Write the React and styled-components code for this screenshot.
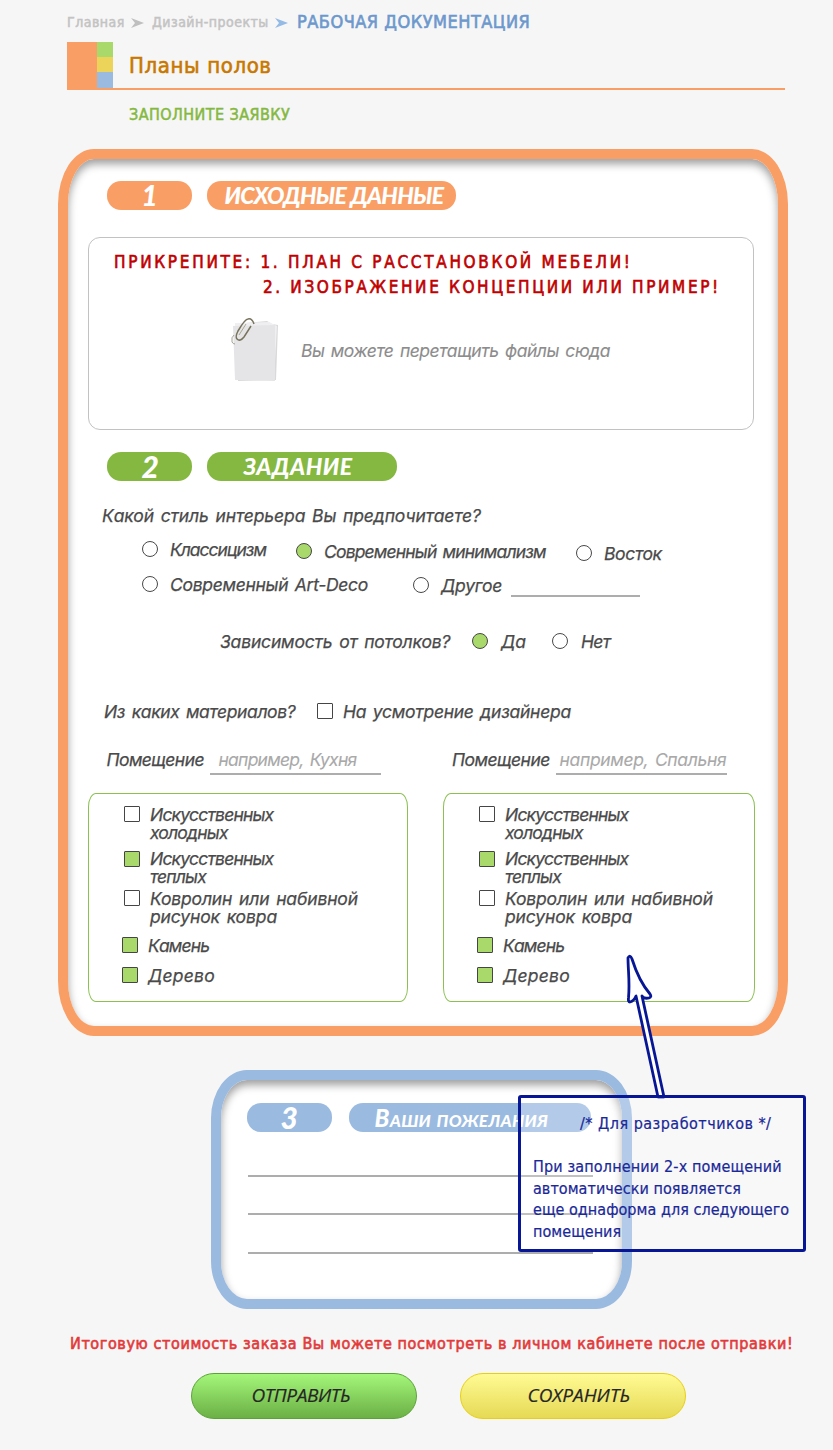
import React from 'react';
import styled, { createGlobalStyle } from 'styled-components';

const tahoma = '"DejaVu Sans Condensed", "DejaVu Sans", sans-serif';
const hand = 'Inter, "Open Sans", sans-serif';
const marker = 'Lato, Inter, sans-serif';

const Global = createGlobalStyle`
  *, *::before, *::after { box-sizing: border-box; }
  body { margin: 0; background: #f6f6f6; }
`;

const Page = styled.div`
  position: relative;
  width: 833px;
  height: 1450px;
  overflow: hidden;
  background: #f6f6f6;
  font-family: ${tahoma};
`;

const Breadcrumbs = styled.nav`
  display: flex;
  align-items: center;
  height: 42px;
  padding: 3px 0 0 67px;
`;

const Crumb = styled.span`
  width: ${p => p.$w}px;
  white-space: nowrap;
  font-size: ${p => (p.$current ? 18 : 14)}px;
  line-height: 20px;
  letter-spacing: ${p => (p.$current ? 0.5 : 0.48)}px;
  color: ${p => (p.$current ? '#6d98cd' : '#c3c3c3')};
  -webkit-text-stroke: ${p => (p.$current ? 0.6 : 0.5)}px currentColor;
  margin-top: ${p => (p.$current ? -2 : -1)}px;
`;

const CrumbArrow = styled.svg`
  width: 13px;
  height: 10px;
  margin: 0 ${p => p.$after}px 0 ${p => p.$before}px;
  fill: ${p => p.$color};
`;

const TitleBar = styled.header`
  display: flex;
  align-items: stretch;
  width: 718px;
  height: 48px;
  margin-left: 67px;
  border-bottom: 2px solid #f99f66;
`;

const LogoMain = styled.div`
  width: 30px;
  background: #f99f66;
`;

const LogoStack = styled.div`
  display: grid;
  grid-template-rows: 15px 15px 16px;
  width: 16px;
`;

const Swatch = styled.div`
  background: ${p => p.$color};
`;

const Title = styled.h1`
  margin: 0 0 0 16px;
  font-size: 22px;
  font-weight: 400;
  line-height: 47px;
  letter-spacing: 0.6px;
  color: #c87800;
  -webkit-text-stroke: 0.6px currentColor;
`;

const Subtitle = styled.h2`
  height: 59px;
  margin: 0 0 0 129px;
  padding-top: 15px;
  font-size: 16px;
  font-weight: 400;
  line-height: 20px;
  letter-spacing: 0.45px;
  color: #85b840;
  -webkit-text-stroke: 0.5px currentColor;
`;

const Panel = styled.section`
  width: ${p => p.$w}px;
  height: ${p => p.$h}px;
  margin-left: ${p => p.$x}px;
  margin-top: ${p => p.$above || 0}px;
  padding-top: ${p => p.$pad}px;
  border: 10px solid ${p => p.$color};
  border-radius: ${p => p.$radius};
  background: #fff;
  box-shadow: inset 0 5px 9px rgba(0, 0, 0, 0.38);
`;

const SectionHead = styled.div`
  display: flex;
  gap: ${p => p.$gap || 15}px;
  height: 29px;
  margin-left: ${p => p.$x}px;
`;

const Pill = styled.div`
  display: flex;
  align-items: center;
  width: ${p => p.$w}px;
  padding-left: ${p => p.$pad}px;
  border-radius: 14px;
  background: ${p => p.$color};
  color: #fff;
  font: italic 900 ${p => p.$size || 23}px/29px ${marker};
  letter-spacing: ${p => p.$ls || 0}px;
  font-variant-caps: ${p => (p.$small ? 'small-caps' : 'normal')};
  white-space: nowrap;
`;

const DropZone = styled.div`
  width: 666px;
  height: 193px;
  margin: 27px 0 22px 20px;
  padding: 12px 0 0 25px;
  border: 1px solid #c2c2c2;
  border-radius: 12px;
`;

const Attach = styled.p`
  margin: 0;
  padding-left: ${p => p.$indent || 0}px;
  font-size: 17px;
  line-height: 25px;
  letter-spacing: ${p => p.$ls}px;
  white-space: nowrap;
  color: #c00000;
  -webkit-text-stroke: 0.6px currentColor;
`;

const DropHint = styled.div`
  display: flex;
  align-items: center;
  margin: 17px 0 0 115px;
`;

const PaperIcon = styled.svg`
  width: 52px;
  height: 70px;
  margin: -2px 20px 0 0;
`;

const Text = styled.span`
  display: block;
  font: italic 400 17.5px/18px ${hand};
  letter-spacing: ${p => p.$ls || 0}px;
  word-spacing: 2px;
  white-space: pre-line;
  flex: none;
  color: ${p => (p.$muted ? '#8c8c8c' : '#4a4a4a')};
  -webkit-text-stroke: ${p => (p.$muted ? 0.1 : 0.25)}px currentColor;
`;

const Row = styled.div`
  display: flex;
  align-items: flex-start;
  height: ${p => p.$h}px;
  padding-top: ${p => p.$top || 0}px;
  padding-left: ${p => p.$x}px;
`;

const Choice = styled.label`
  display: flex;
  align-items: flex-start;
  width: ${p => p.$w}px;
  margin-top: ${p => p.$drop || 0}px;
`;

const Question = styled.div`
  width: ${p => p.$w}px;
`;

const Radio = styled.i`
  flex: none;
  width: 16px;
  height: 16px;
  margin-right: ${p => p.$gap || 12}px;
  border: 1px solid #484848;
  border-radius: 50%;
  background: ${p => (p.$on ? '#a8d96a' : '#fff')};
`;

const Check = styled.i`
  flex: none;
  width: 16px;
  height: 16px;
  margin-top: ${p => p.$top || 0}px;
  margin-right: ${p => p.$gap || 10}px;
  border: 1px solid #454545;
  border-radius: 1px;
  background: ${p => (p.$on ? '#a8d96a' : '#fff')};
`;

const Blank = styled.div`
  width: ${p => p.$w}px;
  height: ${p => p.$h || 24}px;
  padding-left: ${p => p.$pad || 0}px;
  border-bottom: 2px solid #adadad;
  ${Text} { color: #a9a9a9; -webkit-text-stroke-width: 0.1px; }
`;

const Rooms = styled.div`
  display: grid;
  grid-template-columns: 320px 312px;
  column-gap: 35px;
  margin-left: 20px;
`;

const RoomName = styled.div`
  display: flex;
  height: 42px;
  padding-left: ${p => p.$x}px;
`;

const Materials = styled.div`
  height: 209px;
  padding: 12px 0 0 35px;
  border: 1px solid #8cc152;
  border-radius: 8px / 14px;
`;

const Material = styled.label`
  display: flex;
  align-items: flex-start;
  height: ${p => p.$h}px;
  margin-left: ${p => p.$shift || 0}px;
`;

const WishLine = styled.div`
  width: 345px;
  height: ${p => p.$h}px;
  margin-left: 27px;
  border-bottom: 2px solid #adadad;
`;

const Note = styled.aside`
  position: absolute;
  left: 518px;
  top: 1095px;
  width: 288px;
  height: 157px;
  padding: 15px 0 0 12px;
  border: 3px solid #071694;
  border-radius: 3px;
  background: rgba(255, 255, 255, 0.25);
  color: #1a2899;
  font-size: 16px;
  line-height: 21.6px;
  white-space: nowrap;
`;

const NoteLine = styled.div`
  letter-spacing: ${p => p.$ls}px;
  -webkit-text-stroke: 0.2px currentColor;
`;

const NoteTitle = styled(NoteLine)`
  padding-left: 47px;
  margin-bottom: 21.6px;
`;

const NoteArrow = styled.svg`
  position: absolute;
  left: 620px;
  top: 950px;
  width: 50px;
  height: 150px;
`;

const Total = styled.p`
  margin: 23px 0 17px 70px;
  font-size: 16px;
  line-height: 24px;
  letter-spacing: 0.61px;
  white-space: nowrap;
  color: #e23a3a;
  -webkit-text-stroke: 0.6px currentColor;
`;

const Actions = styled.div`
  display: flex;
  gap: 43px;
  padding-left: 190.5px;
`;

const Button = styled.button`
  width: 226px;
  height: 46px;
  padding: 0 0 2px ${p => p.$pad}px;
  border: 1px solid ${p => p.$edge};
  border-radius: 24px;
  background: linear-gradient(${p => p.$from}, ${p => p.$to});
  color: #262626;
  font: italic 500 19px/24px "Open Sans", sans-serif;
  letter-spacing: ${p => p.$ls}px;
  text-align: left;
  -webkit-text-stroke: 0.2px currentColor;
`;

const arrowShape = 'M0 0 L13 5 L0 10 L4 5 Z';

const materials = [
  { h: 44, ls: -0.8, label: 'Искусственных\nхолодных' },
  { h: 40, ls: -0.8, label: 'Искусственных\nтеплых', on: true, drop: 1 },
  { h: 47, ls: -0.15, label: 'Ковролин или набивной\nрисунок ковра' },
  { h: 30, ls: -0.85, label: 'Камень', on: true, shift: -2 },
  { h: 30, ls: 0.2, label: 'Дерево', on: true, shift: -2 },
];

const MaterialList = () => (
  <Materials>
    {materials.map(m => (
      <Material key={m.label} $h={m.h} $shift={m.shift}>
        <Check $on={m.on} $top={m.drop} />
        <Text $ls={m.ls}>{m.label}</Text>
      </Material>
    ))}
  </Materials>
);

export default function App() {
  return (
    <Page>
      <Global />
      <Breadcrumbs>
        <Crumb $w={58}>Главная</Crumb>
        <CrumbArrow $color="#bfbfbf" $before={6} $after={8} viewBox="0 0 13 10"><path d={arrowShape} /></CrumbArrow>
        <Crumb $w={116}>Дизайн-проекты</Crumb>
        <CrumbArrow $color="#94bae6" $before={7} $after={9} viewBox="0 0 13 10"><path d={arrowShape} /></CrumbArrow>
        <Crumb $w={240} $current>РАБОЧАЯ ДОКУМЕНТАЦИЯ</Crumb>
      </Breadcrumbs>
      <TitleBar>
        <LogoMain />
        <LogoStack>
          <Swatch $color="#a8d96a" />
          <Swatch $color="#ecd35a" />
          <Swatch $color="#9abae0" />
        </LogoStack>
        <Title>Планы полов</Title>
      </TitleBar>
      <Subtitle>ЗАПОЛНИТЕ ЗАЯВКУ</Subtitle>

      <Panel $x={58} $w={730} $h={887} $pad={22} $color="#f99f66" $radius="36px / 55px">
        <SectionHead $x={38.5}>
          <Pill $color="#f99f66" $w={85} $pad={35} $size={28}>1</Pill>
          <Pill $color="#f99f66" $w={249} $pad={18} $ls={-0.75}>ИСХОДНЫЕ ДАННЫЕ</Pill>
        </SectionHead>
        <DropZone>
          <Attach $ls={2.71}>ПРИКРЕПИТЕ: 1. ПЛАН С РАССТАНОВКОЙ МЕБЕЛИ!</Attach>
          <Attach $ls={2.63} $indent={149}>2. ИЗОБРАЖЕНИЕ КОНЦЕПЦИИ ИЛИ ПРИМЕР!</Attach>
          <DropHint>
            <PaperIcon viewBox="0 0 52 70">
              <path d="M7 9 L38 6 L43 9 L49 10 L47 65 L9 66Z" fill="#d9d9db" />
              <path d="M6 8 L40 7 L48 11 L45 64 L8 65Z" fill="#efeff1" />
              <path d="M4 11 L46 10 L46 66 L6 65Z" fill="#e5e5e8" />
              <path d="M5 20 Q2 22 3 27 Q4 29 6 29" fill="none" stroke="#a3a192" strokeWidth="1" />
              <path d="M25 9 Q23 3 19 4 Q16 4 9 16 Q6 22 8 24 Q11 27 15 22 L22 11" fill="none" stroke="#77735c" strokeWidth="1.5" />
              <path d="M17 9 L10 20" fill="none" stroke="#aaa68d" strokeWidth="1" />
            </PaperIcon>
            <Text $muted $ls={-0.47}>Вы можете перетащить файлы сюда</Text>
          </DropHint>
        </DropZone>
        <SectionHead $x={38.5}>
          <Pill $color="#85b840" $w={85} $pad={35} $size={30}>2</Pill>
          <Pill $color="#85b840" $w={190} $pad={37} $ls={0.5}>ЗАДАНИЕ</Pill>
        </SectionHead>

        <Row $x={34} $h={60} $top={26}>
          <Text $ls={-0.12}>Какой стиль интерьера Вы предпочитаете?</Text>
        </Row>
        <Row $x={74} $h={35}>
          <Choice $w={154}><Radio /><Text $ls={-1}>Классицизм</Text></Choice>
          <Choice $w={280} $drop={2}><Radio $on /><Text $ls={-0.82}>Современный минимализм</Text></Choice>
          <Choice $drop={4}><Radio /><Text $ls={-0.35}>Восток</Text></Choice>
        </Row>
        <Row $x={74} $h={57}>
          <Choice $w={271}><Radio /><Text $ls={-0.3}>Современный Art-Deco</Text></Choice>
          <Choice $w={98} $drop={1}><Radio /><Text $ls={-0.25}>Другое</Text></Choice>
          <Blank $w={129} $h={21} />
        </Row>
        <Row $x={152} $h={70}>
          <Question $w={252}><Text $ls={-0.18}>Зависимость от потолков?</Text></Question>
          <Choice $w={80}><Radio $on $gap={13} /><Text>Да</Text></Choice>
          <Choice><Radio $gap={13} /><Text $ls={-0.7}>Нет</Text></Choice>
        </Row>
        <Row $x={36} $h={48}>
          <Question $w={213}><Text $ls={-0.37}>Из каких материалов?</Text></Question>
          <Choice><Check /><Text $ls={-0.27}>На усмотрение дизайнера</Text></Choice>
        </Row>
        <Rooms>
          <RoomName $x={18.5}>
            <Question $w={103.5}><Text $ls={-0.55}>Помещение</Text></Question>
            <Blank $w={171} $pad={8.5}><Text $ls={-0.75}>например, Кухня</Text></Blank>
          </RoomName>
          <RoomName $x={9}>
            <Question $w={104}><Text $ls={-0.5}>Помещение</Text></Question>
            <Blank $w={171} $pad={3.5}><Text $ls={-0.33}>например, Спальня</Text></Blank>
          </RoomName>
          <MaterialList />
          <MaterialList />
        </Rooms>
      </Panel>

      <Panel $above={34} $x={211} $w={421} $h={239} $pad={23} $color="#9abae0" $radius="36px / 48px">
        <SectionHead $x={25.5} $gap={17}>
          <Pill $color="#9abae0" $w={85} $pad={34} $size={30}>3</Pill>
          <Pill $color="#9abae0" $w={242} $pad={26} $size={24} $ls={0.3} $small>Ваши пожелания</Pill>
        </SectionHead>
        <WishLine $h={45} />
        <WishLine $h={38} />
        <WishLine $h={39} />
      </Panel>

      <Total>Итоговую стоимость заказа Вы можете посмотреть в личном кабинете после отправки!</Total>
      <Actions>
        <Button $from="#a4f67a" $to="#6bb045" $edge="#5aa336" $ls={-0.4} $pad={60}>ОТПРАВИТЬ</Button>
        <Button $from="#fffb94" $to="#e6d955" $edge="#e8cf10" $ls={0} $pad={67}>СОХРАНИТЬ</Button>
      </Actions>

      <NoteArrow viewBox="0 0 50 150" fill="#fff" stroke="#071694" strokeWidth="2.8" strokeLinejoin="round">
        <path d="M8 8 Q10 4 12 9 C17 25 24 37 30 44 Q32 47 29 48 Q24 49 22 46 L44 147 L38 147 L16 46 Q14 51 10 52 Q8 52 8.500 48 C10 32 8 20 8 8Z" />
      </NoteArrow>
      <Note>
        <NoteTitle $ls={0.48}>/* Для разработчиков */</NoteTitle>
        <NoteLine $ls={0.15}>При заполнении 2-х помещений</NoteLine>
        <NoteLine $ls={0.05}>автоматически появляется</NoteLine>
        <NoteLine $ls={0.04}>еще однаформа для следующего</NoteLine>
        <NoteLine $ls={0.05}>помещения</NoteLine>
      </Note>
    </Page>
  );
}
